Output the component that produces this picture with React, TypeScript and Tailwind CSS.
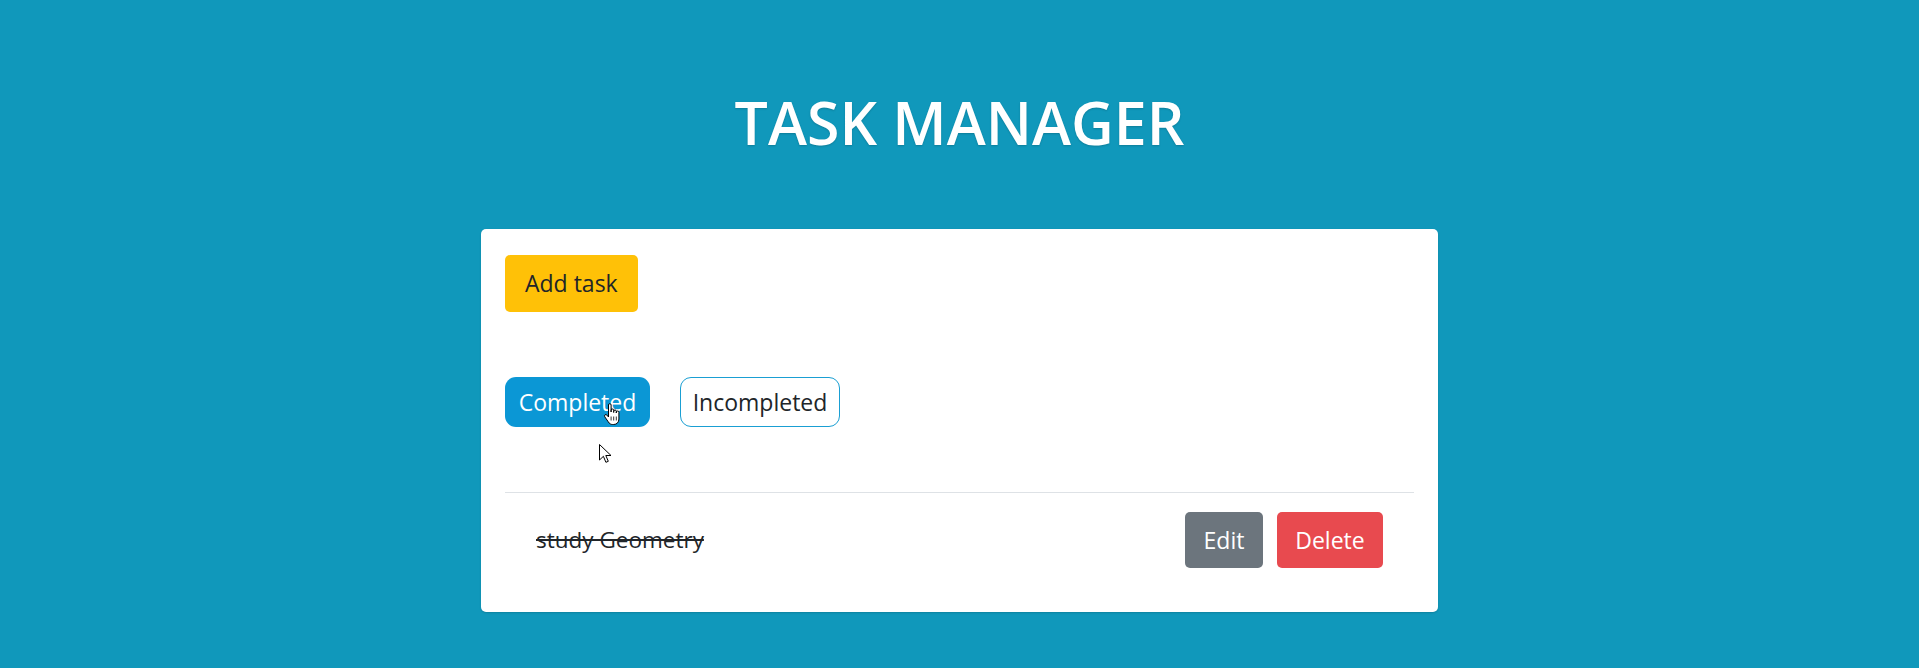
import React from "react";

function ArrowCursor() {
  return (
    <svg width="13" height="20" viewBox="0 0 13 20" className="absolute left-[599px] top-[444px]">
      <path d="M0.5 0.5 L0.5 16 L4.4 12.3 L6.9 18.3 L9.3 17.3 L6.8 11.5 L12 11.5 Z" fill="#fff" stroke="#000" strokeWidth="1" strokeLinejoin="round" />
    </svg>
  );
}

function HandCursor() {
  return (
    <svg width="18" height="23" viewBox="0 0 18 23" className="absolute left-[603px] top-[403px]">
      <path
        d="M5.5 10 V2 a1.3 1.3 0 0 1 2.6 0 V9 V7.3 a1.3 1.3 0 0 1 2.6 0 V9.5 V8.3 a1.3 1.3 0 0 1 2.6 0 V10 V9.3 a1.3 1.3 0 0 1 2.6 0 V16 c0 3.2-2 5.5-5.2 5.5 H9.6 c-2 0-3.2-0.9-4.3-2.6 L1.8 13.8 a1.35 1.35 0 0 1 2.1-1.7 L5.5 14 Z"
        fill="#fff"
        stroke="#000"
        strokeWidth="1"
        strokeLinejoin="round"
      />
      <path d="M8.1 13.5 V17.5 M10.7 13.5 V17.5 M13.3 13.5 V17.5" stroke="#000" strokeWidth="0.8" />
    </svg>
  );
}

export default function App() {
  return (
    <div
      className="relative min-h-screen w-full bg-[#1098bb] pt-[88px]"
      style={{ fontFamily: '"Open Sans", "Noto Sans", Arial, sans-serif' }}
    >
      <h1 className="text-center text-[59px] font-semibold leading-[68px] text-white [text-shadow:0_1px_2px_rgba(0,0,0,0.18)]">
        TASK MANAGER
      </h1>

      <div className="mx-auto mt-[73px] w-[957px] rounded-[5px] bg-white px-6 pb-[24px] pt-[26px] shadow-[0_1px_2px_rgba(0,0,0,0.15)]">
        <div className="flex">
          <button className="flex h-[57px] items-center rounded-[5px] bg-[#ffc107] px-[20px] text-[23px] text-[#212529]">
            Add task
          </button>
        </div>

        <div className="mt-[65px] flex gap-[30px]">
          <button className="flex h-[50px] w-[145px] items-center justify-center rounded-[11px] bg-[#0b97d5] text-[23px] text-white">
            Completed
          </button>
          <button className="flex h-[50px] w-[160px] items-center justify-center rounded-[11px] border border-[#1a9fd3] bg-white text-[23px] text-[#212529]">
            Incompleted
          </button>
        </div>

        <div className="mt-[65px] border-t border-[#dee2e6]">
          <div className="flex items-center justify-between px-[31px] pb-[20px] pt-[19px]">
            <span className="text-[22.5px] text-[#212529] line-through">study Geometry</span>
            <div className="flex gap-[14px]">
              <button className="flex h-[56px] w-[78px] items-center justify-center rounded-[5px] bg-[#6c757d] text-[23px] text-white">
                Edit
              </button>
              <button className="flex h-[56px] w-[106px] items-center justify-center rounded-[5px] bg-[#e84a4f] text-[23px] text-white">
                Delete
              </button>
            </div>
          </div>
        </div>
      </div>

      <HandCursor />
      <ArrowCursor />
    </div>
  );
}
